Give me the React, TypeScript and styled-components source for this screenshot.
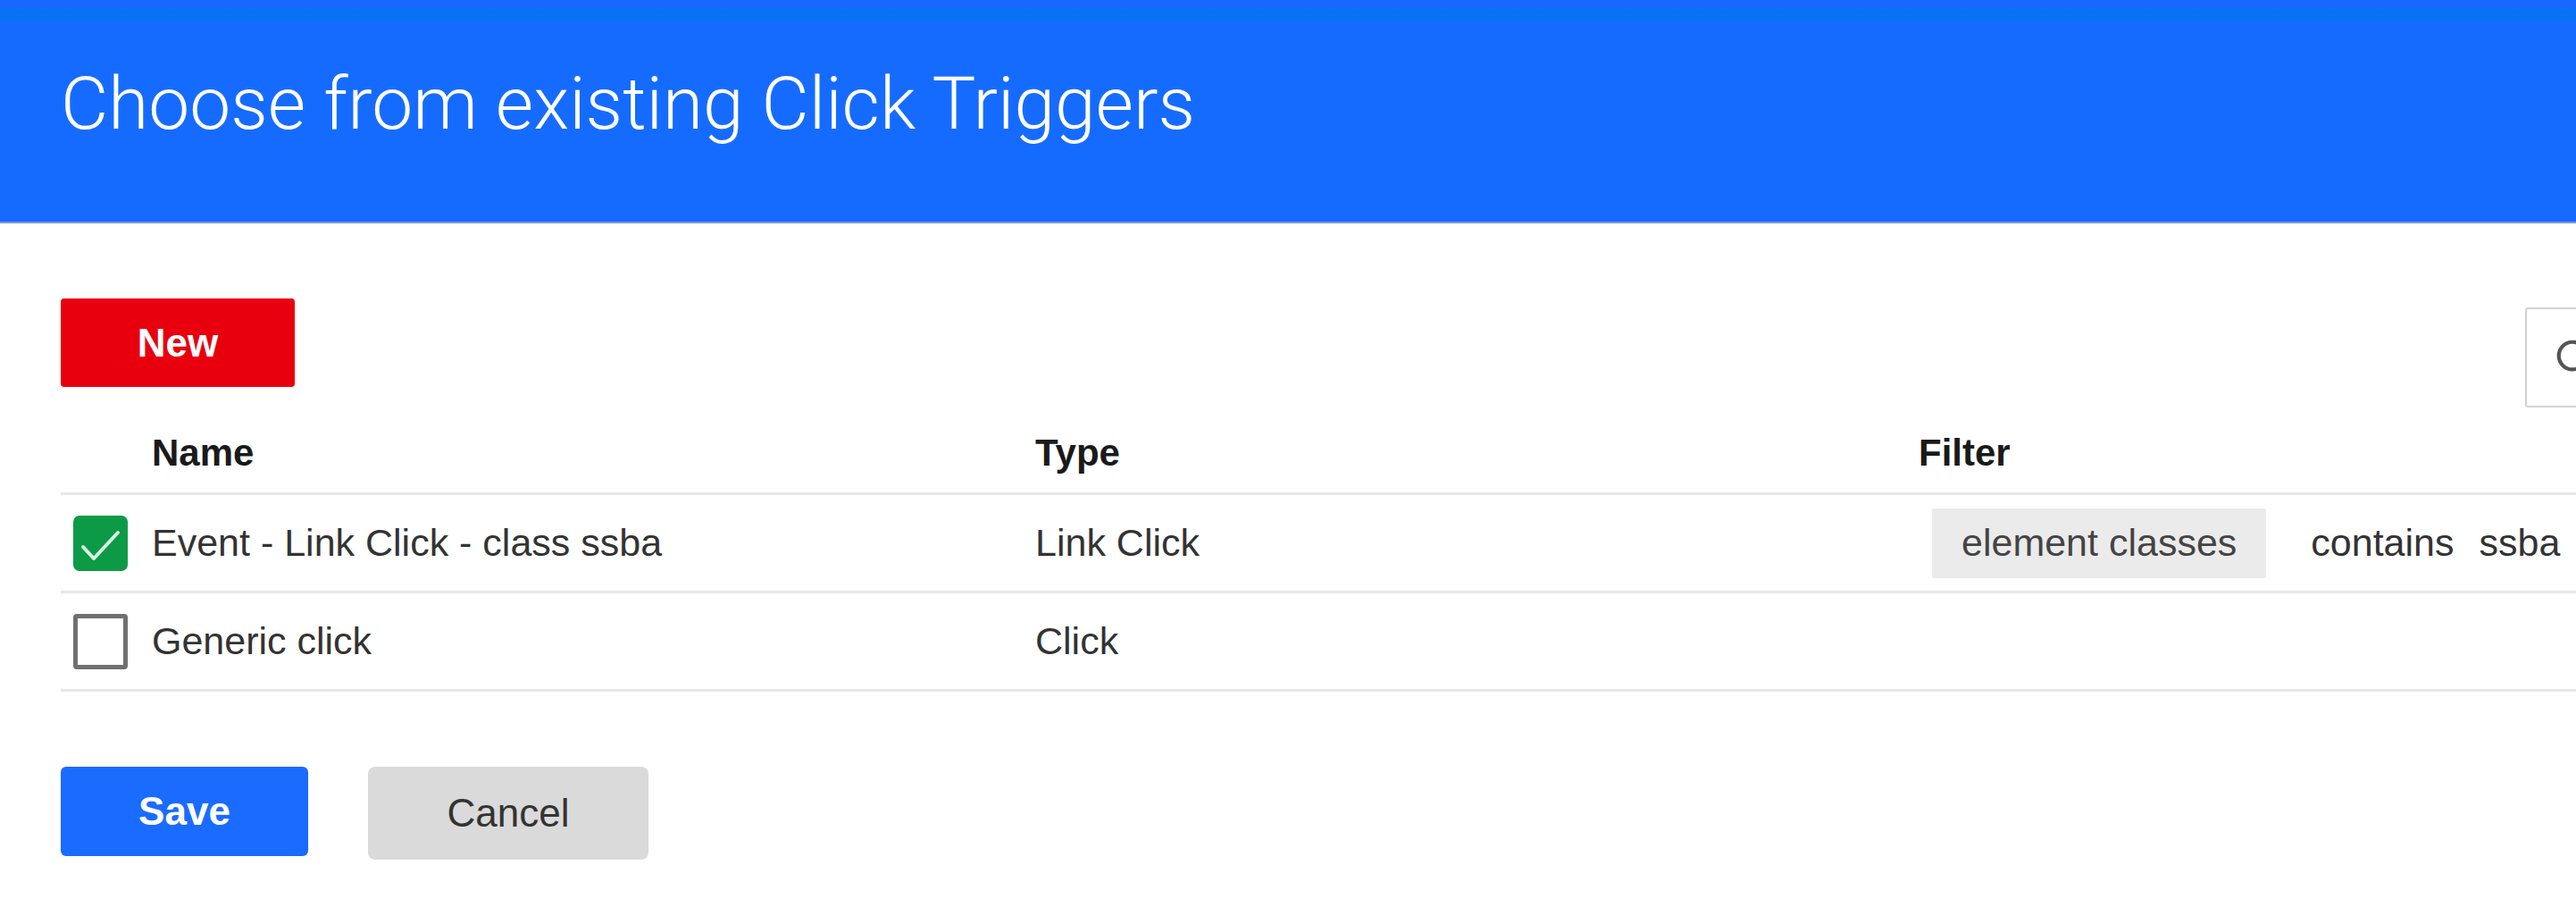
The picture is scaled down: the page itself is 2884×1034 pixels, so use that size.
import React from 'react';
import styled, { createGlobalStyle } from 'styled-components';
import { Search } from 'lucide-react';

const GlobalStyle = createGlobalStyle`
  html, body {
    margin: 0;
    padding: 0;
    background: #ffffff;
    overflow: hidden;
  }
  body {
    font-family: "Liberation Sans", Arial, sans-serif;
  }
  * { box-sizing: border-box; }
`;

const Page = styled.div`
  width: 2884px;
  height: 1034px;
  overflow: hidden;
  background: #ffffff;
`;

const Header = styled.header`
  height: 250px;
  padding: 75px 0 0 68px;
  background: linear-gradient(
    to bottom,
    #1a67ff 0px,
    #1a67ff 6px,
    #0574f2 12px,
    #0a72f5 22px,
    #166bff 28px,
    #166bff 100%
  );
  border-bottom: 2px solid #7e98d4;
`;

const Title = styled.h1`
  margin: 0;
  font-family: Roboto, "Liberation Sans", sans-serif;
  font-weight: 300;
  font-size: 82px;
  line-height: 82px;
  color: #ffffff;
  white-space: nowrap;
`;

const Body = styled.main`
  width: 2968px;
  padding: 84px 0 0 68px;
`;

const Toolbar = styled.div`
  height: 122px;
  display: flex;
  justify-content: space-between;
  align-items: flex-start;
`;

const BaseButton = styled.button`
  border: none;
  display: flex;
  align-items: center;
  justify-content: center;
  font-family: "Liberation Sans", Arial, sans-serif;
  font-size: 44px;
  padding: 0;
  cursor: pointer;
`;

const NewButton = styled(BaseButton)`
  width: 262px;
  height: 99px;
  border-radius: 4px;
  background: #e8000f;
  color: #ffffff;
  font-weight: 700;
`;

const SearchBox = styled.div`
  margin-top: 10px;
  width: 141px;
  height: 112px;
  border: 2px solid #d2d2d2;
  border-radius: 3px;
  display: flex;
  align-items: center;
  padding-left: 30px;
  color: #555555;
`;

const Table = styled.div`
  display: flex;
  flex-direction: column;
`;

const columns = `102px 989px 989px 1fr`;

const HeaderRow = styled.div`
  display: grid;
  grid-template-columns: ${columns};
  height: 98px;
  padding-top: 7px;
  align-items: center;
  border-bottom: 3px solid #e7e7e7;
`;

const HeadCell = styled.div`
  font-size: 42px;
  line-height: 42px;
  font-weight: 700;
  color: #1a1a1a;
  white-space: nowrap;
`;

const Row = styled.div`
  display: grid;
  grid-template-columns: ${columns};
  height: 110px;
  align-items: center;
  border-bottom: 3px solid #e7e7e7;
`;

const Cell = styled.div`
  font-size: 43px;
  line-height: 43px;
  color: #333333;
  white-space: nowrap;
  display: flex;
  align-items: center;
`;

const CheckCell = styled.div`
  display: flex;
  align-items: center;
  padding-left: 14px;
`;

const CheckBox = styled.div<{ $checked: boolean }>`
  width: 61px;
  height: 62px;
  border-radius: ${(p) => (p.$checked ? '7px' : '4px')};
  background: ${(p) => (p.$checked ? '#0d9a47' : '#ffffff')};
  border: ${(p) => (p.$checked ? 'none' : '5px solid #707070')};
  display: flex;
  align-items: center;
  justify-content: center;
`;

const Chip = styled.span`
  margin-left: 15px;
  height: 78px;
  padding: 0 33px;
  background: #ebebeb;
  border-radius: 2px;
  display: flex;
  align-items: center;
  color: #444444;
`;

const Word = styled.span<{ $gap: number }>`
  margin-left: ${(p) => p.$gap}px;
  color: #333333;
`;

const Footer = styled.div`
  margin-top: 84px;
  display: flex;
  align-items: flex-start;
  gap: 67px;
`;

const SaveButton = styled(BaseButton)`
  width: 277px;
  height: 100px;
  border-radius: 6px;
  background: #1a6bff;
  color: #ffffff;
  font-weight: 700;
`;

const CancelButton = styled(BaseButton)`
  width: 314px;
  height: 104px;
  border-radius: 8px;
  background: #dadada;
  color: #333333;
  font-weight: 400;
`;

const CheckMark = () => (
  <svg width="61" height="62" viewBox="0 0 61 62">
    <polyline
      points="11,35 23,48 50,19"
      fill="none"
      stroke="#d9f7e2"
      strokeWidth="4"
      strokeLinecap="round"
      strokeLinejoin="round"
    />
  </svg>
);

type Trigger = {
  name: string;
  type: string;
  checked: boolean;
  filter?: { variable: string; op: string; value: string };
};

const triggers: Trigger[] = [
  {
    name: 'Event - Link Click - class ssba',
    type: 'Link Click',
    checked: true,
    filter: { variable: 'element classes', op: 'contains', value: 'ssba' },
  },
  { name: 'Generic click', type: 'Click', checked: false },
];

export default function App() {
  return (
    <Page>
      <GlobalStyle />
      <Header>
        <Title>Choose from existing Click Triggers</Title>
      </Header>
      <Body>
        <Toolbar>
          <NewButton>New</NewButton>
          <SearchBox>
            <Search size={46} strokeWidth={2.2} />
          </SearchBox>
        </Toolbar>
        <Table>
          <HeaderRow>
            <div />
            <HeadCell>Name</HeadCell>
            <HeadCell>Type</HeadCell>
            <HeadCell>Filter</HeadCell>
          </HeaderRow>
          {triggers.map((t) => (
            <Row key={t.name}>
              <CheckCell>
                <CheckBox $checked={t.checked}>{t.checked && <CheckMark />}</CheckBox>
              </CheckCell>
              <Cell>{t.name}</Cell>
              <Cell>{t.type}</Cell>
              <Cell>
                {t.filter && (
                  <>
                    <Chip>{t.filter.variable}</Chip>
                    <Word $gap={50}>{t.filter.op}</Word>
                    <Word $gap={28}>{t.filter.value}</Word>
                  </>
                )}
              </Cell>
            </Row>
          ))}
        </Table>
        <Footer>
          <SaveButton>Save</SaveButton>
          <CancelButton>Cancel</CancelButton>
        </Footer>
      </Body>
    </Page>
  );
}
